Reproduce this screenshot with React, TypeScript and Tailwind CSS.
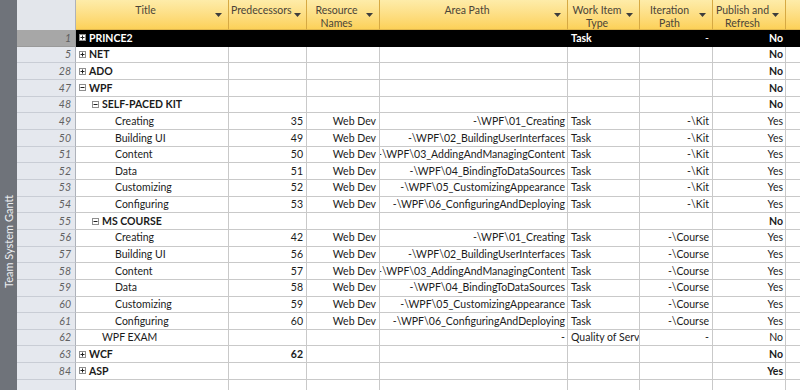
import React from "react";

type Row = {
  id: number;
  title: string;
  level: number;
  exp?: "plus" | "minus";
  bold?: boolean;
  pred?: string;
  predBold?: boolean;
  res?: string;
  area?: string;
  wit?: string;
  witBold?: boolean;
  iter?: string;
  pub: string;
  pubBold?: boolean;
  dark?: boolean;
};

const rows: Row[] = [
  { id: 1, title: "PRINCE2", level: 0, exp: "plus", bold: true, wit: "Task", witBold: true, iter: "-", pub: "No", pubBold: true, dark: true },
  { id: 5, title: "NET", level: 0, exp: "plus", bold: true, pub: "No", pubBold: true },
  { id: 28, title: "ADO", level: 0, exp: "plus", bold: true, pub: "No", pubBold: true },
  { id: 47, title: "WPF", level: 0, exp: "minus", bold: true, pub: "No", pubBold: true },
  { id: 48, title: "SELF-PACED KIT", level: 1, exp: "minus", bold: true, pub: "No", pubBold: true },
  { id: 49, title: "Creating", level: 2, pred: "35", res: "Web Dev", area: "-\\WPF\\01_Creating", wit: "Task", iter: "-\\Kit", pub: "Yes" },
  { id: 50, title: "Building UI", level: 2, pred: "49", res: "Web Dev", area: "-\\WPF\\02_BuildingUserInterfaces", wit: "Task", iter: "-\\Kit", pub: "Yes" },
  { id: 51, title: "Content", level: 2, pred: "50", res: "Web Dev", area: "-\\WPF\\03_AddingAndManagingContent", wit: "Task", iter: "-\\Kit", pub: "Yes" },
  { id: 52, title: "Data", level: 2, pred: "51", res: "Web Dev", area: "-\\WPF\\04_BindingToDataSources", wit: "Task", iter: "-\\Kit", pub: "Yes" },
  { id: 53, title: "Customizing", level: 2, pred: "52", res: "Web Dev", area: "-\\WPF\\05_CustomizingAppearance", wit: "Task", iter: "-\\Kit", pub: "Yes" },
  { id: 54, title: "Configuring", level: 2, pred: "53", res: "Web Dev", area: "-\\WPF\\06_ConfiguringAndDeploying", wit: "Task", iter: "-\\Kit", pub: "Yes" },
  { id: 55, title: "MS COURSE", level: 1, exp: "minus", bold: true, pub: "No", pubBold: true },
  { id: 56, title: "Creating", level: 2, pred: "42", res: "Web Dev", area: "-\\WPF\\01_Creating", wit: "Task", iter: "-\\Course", pub: "Yes" },
  { id: 57, title: "Building UI", level: 2, pred: "56", res: "Web Dev", area: "-\\WPF\\02_BuildingUserInterfaces", wit: "Task", iter: "-\\Course", pub: "Yes" },
  { id: 58, title: "Content", level: 2, pred: "57", res: "Web Dev", area: "-\\WPF\\03_AddingAndManagingContent", wit: "Task", iter: "-\\Course", pub: "Yes" },
  { id: 59, title: "Data", level: 2, pred: "58", res: "Web Dev", area: "-\\WPF\\04_BindingToDataSources", wit: "Task", iter: "-\\Course", pub: "Yes" },
  { id: 60, title: "Customizing", level: 2, pred: "59", res: "Web Dev", area: "-\\WPF\\05_CustomizingAppearance", wit: "Task", iter: "-\\Course", pub: "Yes" },
  { id: 61, title: "Configuring", level: 2, pred: "60", res: "Web Dev", area: "-\\WPF\\06_ConfiguringAndDeploying", wit: "Task", iter: "-\\Course", pub: "Yes" },
  { id: 62, title: "WPF EXAM", level: 1, area: "-", wit: "Quality of Serv", iter: "-", pub: "No" },
  { id: 63, title: "WCF", level: 0, exp: "plus", bold: true, pred: "62", predBold: true, pub: "No", pubBold: true },
  { id: 84, title: "ASP", level: 0, exp: "plus", bold: true, pub: "Yes", pubBold: true },
];

const COLS = "grid grid-cols-[59px_153px_78px_73px_188px_72px_73px_73px_14px]";

function Arrow() {
  return (
    <svg width="7" height="4" viewBox="0 0 7 4" className="shrink-0">
      <path d="M0 0H7L3.5 4Z" fill="#3d3d3d" />
    </svg>
  );
}

function Head({ lines }: { lines: string[] }) {
  return (
    <div className="flex border-r border-b border-r-[#d6a943] border-b-[#e0b64e] bg-linear-to-b from-[#feeca9] to-[#fcd158] pl-[2px] pr-[6px]">
      <div className="flex-1 pt-[4px] text-center text-[10.5px] leading-[12.5px] text-[#4a4438]">
        {lines.map((l) => (
          <div key={l}>{l}</div>
        ))}
      </div>
      <div className="pt-[13px] pl-[2px]">
        <Arrow />
      </div>
    </div>
  );
}

function Expander({ type }: { type: "plus" | "minus" }) {
  return (
    <svg width="7" height="7" viewBox="0 0 7 7" className="shrink-0">
      <rect x="0.5" y="0.5" width="6" height="6" fill="#ffffff" stroke="#8e8e8e" />
      <path d="M1.5 3.5H5.5" stroke="#1f1f1f" />
      {type === "plus" && <path d="M3.5 1.5V5.5" stroke="#1f1f1f" />}
    </svg>
  );
}

function DataRow({ r }: { r: Row }) {
  const line = r.dark ? "border-black" : "border-[#c9c9c9]";
  const txt = r.dark ? "text-white" : "text-[#1b1b1b]";
  const cell = `flex items-center overflow-hidden whitespace-nowrap border-r border-b ${line} px-[3px]`;
  const right = `${cell} justify-end`;
  const bg = r.dark ? "bg-black" : "bg-white";
  return (
    <div className={`${COLS} h-[16.67px] text-[10.5px] leading-none ${txt} ${bg}`}>
      <div
        className={`flex items-center justify-end border-r border-b pr-[4px] italic ${
          r.dark ? "bg-[#a7a7a7] border-[#9a9a9a] text-[#5e5e5e]" : "bg-[#e5e8ee] border-r-[#aeb2ba] border-b-[#c9cdd5] text-[#616161]"
        }`}
      >
        {r.id}
      </div>
      <div className={`${cell} pl-[3px]`}>
        <div style={{ width: r.level * 13 }} className="shrink-0" />
        {r.exp ? <Expander type={r.exp} /> : <div className="w-[7px] shrink-0" />}
        <span className={`ml-[3px] ${r.bold ? "font-bold" : ""}`}>{r.title}</span>
      </div>
      <div className={`${right} ${r.predBold ? "font-bold" : ""}`}>
        <span className="shrink-0">{r.pred}</span>
      </div>
      <div className={right}>
        <span className="shrink-0">{r.res}</span>
      </div>
      <div className={`${right} pr-[2px]`}>
        <span className="shrink-0">{r.area}</span>
      </div>
      <div className={`${cell} ${r.witBold ? "font-bold" : ""}`}>
        <span className="shrink-0">{r.wit}</span>
      </div>
      <div className={right}>
        <span className="shrink-0">{r.iter}</span>
      </div>
      <div className={`${right} pr-[2px] ${r.pubBold ? "font-bold" : ""}`}>
        <span className="shrink-0">{r.pub}</span>
      </div>
      <div className={`border-b ${line}`} />
    </div>
  );
}

export default function App() {
  return (
    <div
      className="flex h-[390px] w-[800px] overflow-hidden bg-white"
      style={{ fontFamily: "Lato, 'Liberation Sans', sans-serif" }}
    >
      <div className="flex w-[17px] shrink-0 flex-col items-center justify-end bg-[#6f737a] pb-[102px]">
        <span className="rotate-180 whitespace-nowrap text-[11px] leading-none text-[#eceef1] [writing-mode:vertical-rl]">
          Team System Gantt
        </span>
      </div>
      <div className="flex flex-1 flex-col">
        <div className={`${COLS} h-[30px]`}>
          <div className="border-r border-[#aeb2ba] bg-[#e3e6eb]" />
          <Head lines={["Title"]} />
          <Head lines={["Predecessors"]} />
          <Head lines={["Resource", "Names"]} />
          <Head lines={["Area Path"]} />
          <Head lines={["Work Item", "Type"]} />
          <Head lines={["Iteration", "Path"]} />
          <Head lines={["Publish and", "Refresh"]} />
          <div className="border-b border-[#e0b64e] bg-linear-to-b from-[#feeca9] to-[#fcd158]" />
        </div>
        {rows.map((r) => (
          <DataRow key={r.id} r={r} />
        ))}
        <div className={`${COLS} flex-1`}>
          <div className="border-r border-[#aeb2ba] bg-[#e5e8ee]" />
          <div className="border-r border-[#c9c9c9]" />
          <div className="border-r border-[#c9c9c9]" />
          <div className="border-r border-[#c9c9c9]" />
          <div className="border-r border-[#c9c9c9]" />
          <div className="border-r border-[#c9c9c9]" />
          <div className="border-r border-[#c9c9c9]" />
          <div className="border-r border-[#c9c9c9]" />
          <div />
        </div>
      </div>
    </div>
  );
}
